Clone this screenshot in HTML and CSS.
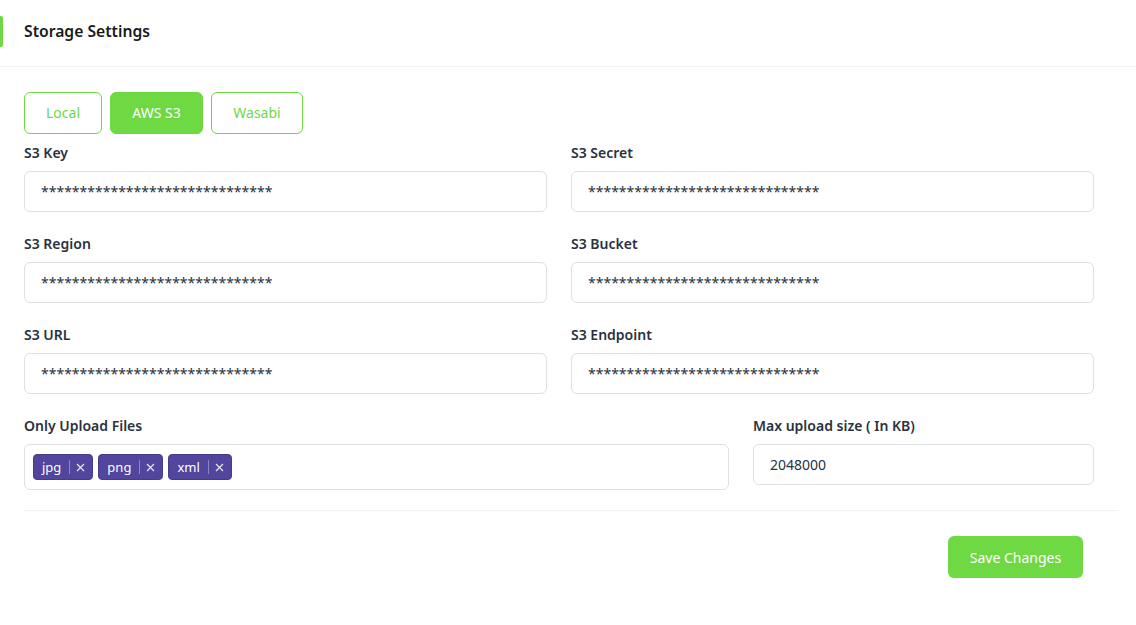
FILE: index.html
```html
<!DOCTYPE html>
<html>
<head>
<meta charset="utf-8">
<link rel="stylesheet" href="styles.css">
</head>
<body>
<div class="card">
  <div class="card-header">
    <h5 class="title">Storage Settings</h5>
  </div>
  <div class="card-body">
    <div class="tabs">
      <button class="tab">Local</button>
      <button class="tab active">AWS S3</button>
      <button class="tab">Wasabi</button>
    </div>
    <div class="grid">
      <div class="field">
        <label class="label">S3 Key</label>
        <div class="input">******************************</div>
      </div>
      <div class="field">
        <label class="label">S3 Secret</label>
        <div class="input">******************************</div>
      </div>
      <div class="field">
        <label class="label">S3 Region</label>
        <div class="input">******************************</div>
      </div>
      <div class="field">
        <label class="label">S3 Bucket</label>
        <div class="input">******************************</div>
      </div>
      <div class="field">
        <label class="label">S3 URL</label>
        <div class="input">******************************</div>
      </div>
      <div class="field">
        <label class="label">S3 Endpoint</label>
        <div class="input">******************************</div>
      </div>
    </div>
    <div class="grid grid-2">
      <div class="field">
        <label class="label">Only Upload Files</label>
        <div class="tags-input">
          <span class="tag">jpg<span class="sep"></span><svg class="x" viewBox="0 0 9 9" width="9" height="9"><path d="M1 1L8 8M8 1L1 8" stroke="#e9e6f5" stroke-width="1.2" fill="none"/></svg></span>
          <span class="tag">png<span class="sep"></span><svg class="x" viewBox="0 0 9 9" width="9" height="9"><path d="M1 1L8 8M8 1L1 8" stroke="#e9e6f5" stroke-width="1.2" fill="none"/></svg></span>
          <span class="tag">xml<span class="sep"></span><svg class="x" viewBox="0 0 9 9" width="9" height="9"><path d="M1 1L8 8M8 1L1 8" stroke="#e9e6f5" stroke-width="1.2" fill="none"/></svg></span>
        </div>
      </div>
      <div class="field">
        <label class="label">Max upload size ( In KB)</label>
        <div class="input">2048000</div>
      </div>
    </div>
  </div>
  <div class="card-footer">
    <button class="save">Save Changes</button>
  </div>
</div>
</body>
</html>
```
FILE: styles.css
```css
* { box-sizing: border-box; }
html, body { margin: 0; padding: 0; background: #fff; }
body {
  font-family: "Noto Sans", "Open Sans", sans-serif;
  color: #293240;
  width: 1136px;
}
.card {
  background: #fff;
  width: 1136px;
}
.card-header {
  position: relative;
  height: 67px;
  border-bottom: 1px solid #f1f1f1;
  display: flex;
  align-items: center;
  padding: 0 24px 5px;
}
.card-header::before {
  content: "";
  position: absolute;
  left: 0;
  top: 16px;
  width: 3px;
  height: 31px;
  background: #6fd943;
  border-radius: 0 2px 2px 0;
}
.title {
  margin: 0;
  font-size: 15.7px;
  font-weight: 600;
  color: #1a1a1a;
}
.card-body {
  padding: 25px 24px 20px 0;
  border-bottom: 1px solid #f1f1f1;
  margin: 0 18px 0 24px;
}
.tabs {
  display: flex;
  gap: 8px;
  margin-bottom: 8px;
}
.tab {
  font-family: inherit;
  font-size: 14px;
  height: 42px;
  padding: 0 0 2px;
  border: 1px solid #6fd943;
  background: #fff;
  color: #6fd943;
  border-radius: 6px;
}
.tab:nth-child(1) { width: 78px; }
.tab:nth-child(2) { width: 93px; }
.tab:nth-child(3) { width: 92px; }
.tab.active {
  background: #6fd943;
  color: #fff;
}
.grid {
  display: grid;
  grid-template-columns: 1fr 1fr;
  column-gap: 24px;
  row-gap: 21px;
  width: 1070px;
}
.grid-2 {
  grid-template-columns: 705px 341px;
  margin-top: 21px;
}
.field {
  display: flex;
  flex-direction: column;
}
.label {
  font-size: 14px;
  font-weight: 600;
  line-height: 21px;
  margin-bottom: 8px;
  color: #293240;
}
.input {
  height: 41px;
  border: 1px solid #dde0e5;
  border-radius: 6px;
  padding: 0 16px;
  display: flex;
  align-items: center;
  font-size: 14px;
  color: #293240;
}
.tags-input {
  height: 46px;
  border: 1px solid #dde0e5;
  border-radius: 6px;
  padding: 0 8px;
  display: flex;
  align-items: center;
  gap: 5px;
}
.tag {
  display: inline-flex;
  align-items: center;
  height: 26px;
  padding: 0 7px 0 8px;
  background: #51459d;
  border: 1px solid #463b8c;
  color: #fff;
  border-radius: 4px;
  font-size: 13px;
}
.sep {
  width: 1px;
  height: 14px;
  background: rgba(255,255,255,0.35);
  margin: 0 6px 0 8px;
}
.x {
  display: block;
}
.card-footer {
  display: flex;
  justify-content: flex-end;
  padding: 25px 53px 0 0;
}
.save {
  font-family: inherit;
  font-size: 14px;
  height: 42px;
  width: 135px;
  border: none;
  border-radius: 6px;
  background: #6fd943;
  color: #fff;
}
```
